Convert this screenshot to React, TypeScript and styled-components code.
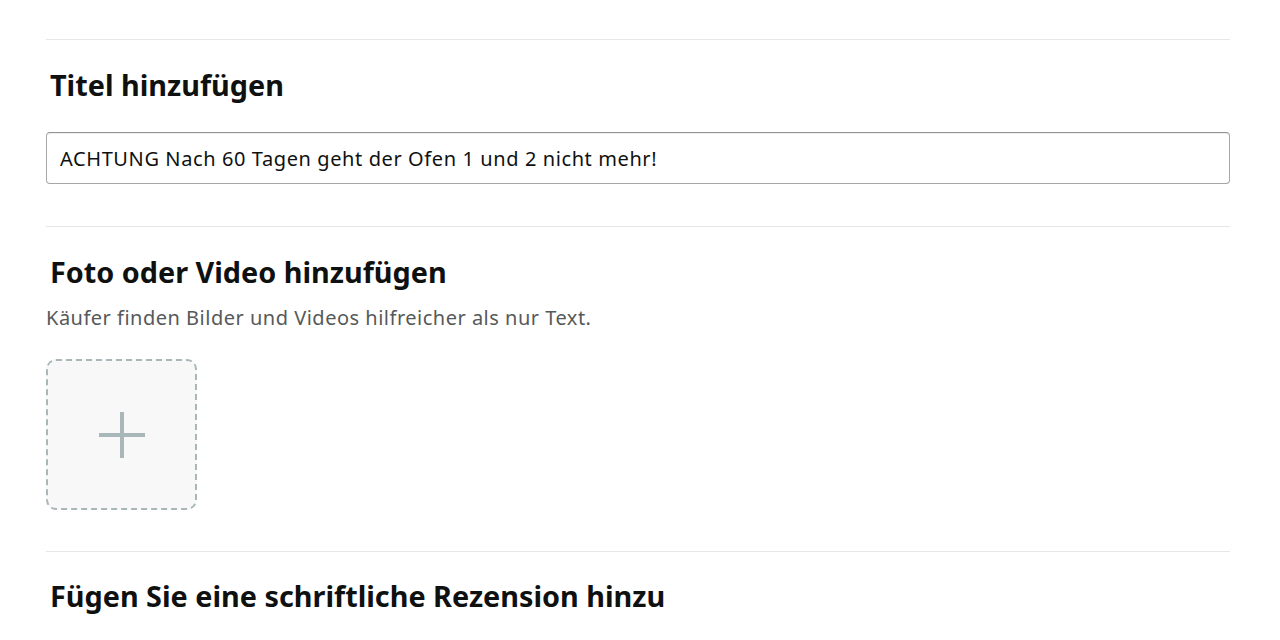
import React from 'react';
import styled, { createGlobalStyle } from 'styled-components';

const GlobalStyle = createGlobalStyle`
  body {
    margin: 0;
    background: #fff;
    font-family: "Noto Sans", Arial, sans-serif;
    color: #0f1111;
  }
`;

const Page = styled.div`
  width: 1184px;
  padding: 0 46px;
`;

const TopStrip = styled.div`
  height: 39px;
`;

const Divider = styled.hr`
  margin: 0;
  border: none;
  border-top: 1px solid #e7e7e7;
`;

const Section = styled.section<{ $pt: number; $pb: number }>`
  padding: ${(p) => p.$pt}px 0 ${(p) => p.$pb}px;
`;

const Heading = styled.h2`
  margin: 0;
  padding-left: 4px;
  font-size: 28.8px;
  line-height: 36px;
  font-weight: 700;
  color: #0f1111;
`;

const TitleInput = styled.input`
  display: block;
  box-sizing: border-box;
  width: 100%;
  height: 52px;
  margin-top: 29px;
  padding: 0 13px;
  border: 1px solid #a6a6a6;
  border-top-color: #949494;
  border-radius: 4px;
  box-shadow: 0 1px 0 rgba(255, 255, 255, 0.5), 0 1px 0 rgba(0, 0, 0, 0.07) inset;
  font-family: "Noto Sans", Arial, sans-serif;
  font-size: 20px;
  letter-spacing: 0.6px;
  color: #0f1111;
  outline: none;
`;

const Hint = styled.p`
  margin: 16px 0 0;
  font-size: 20px;
  line-height: 24px;
  letter-spacing: 0.5px;
  color: #565959;
`;

const UploadBox = styled.button`
  display: flex;
  align-items: center;
  justify-content: center;
  width: 151px;
  height: 151px;
  margin-top: 29px;
  padding: 0;
  background: #f8f8f8;
  border: 2px dashed #aab7b8;
  border-radius: 10px;
  cursor: pointer;
`;

const PlusIcon = () => (
  <svg width="46" height="46" viewBox="0 0 46 46">
    <path d="M23 0v46M0 23h46" stroke="#aab7b8" strokeWidth="4" fill="none" />
  </svg>
);

export default function App() {
  return (
    <Page>
      <GlobalStyle />
      <TopStrip />
      <Divider />
      <Section $pt={27} $pb={42}>
        <Heading>Titel hinzufügen</Heading>
        <TitleInput defaultValue="ACHTUNG Nach 60 Tagen geht der Ofen 1 und 2 nicht mehr!" />
      </Section>
      <Divider />
      <Section $pt={27} $pb={41}>
        <Heading>Foto oder Video hinzufügen</Heading>
        <Hint>Käufer finden Bilder und Videos hilfreicher als nur Text.</Hint>
        <UploadBox aria-label="Foto oder Video hinzufügen">
          <PlusIcon />
        </UploadBox>
      </Section>
      <Divider />
      <Section $pt={26} $pb={20}>
        <Heading>Fügen Sie eine schriftliche Rezension hinzu</Heading>
      </Section>
    </Page>
  );
}
